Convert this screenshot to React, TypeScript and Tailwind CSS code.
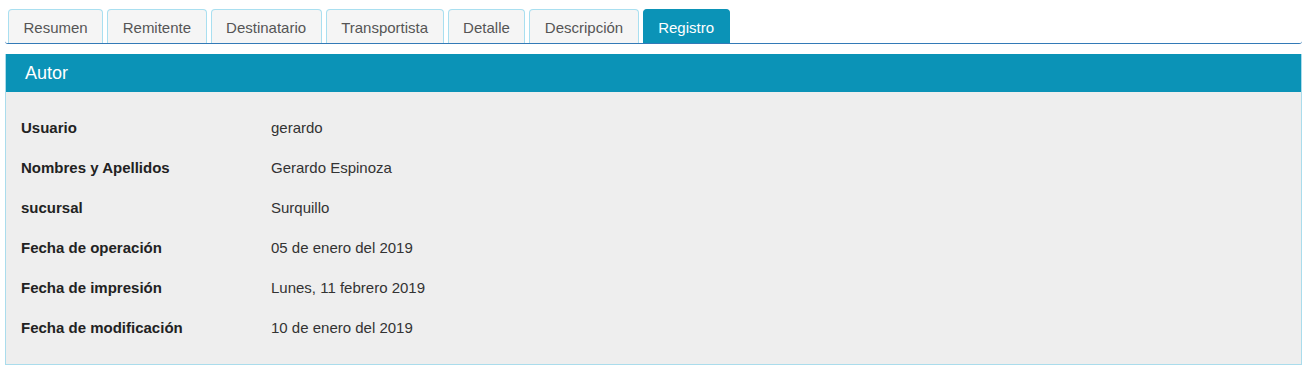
import React from "react";

const tabs = ["Resumen", "Remitente", "Destinatario", "Transportista", "Detalle", "Descripción", "Registro"];
const rows: [string, string][] = [
  ["Usuario", "gerardo"],
  ["Nombres y Apellidos", "Gerardo Espinoza"],
  ["sucursal", "Surquillo"],
  ["Fecha de operación", "05 de enero del 2019"],
  ["Fecha de impresión", "Lunes, 11 febrero 2019"],
  ["Fecha de modificación", "10 de enero del 2019"],
];

export default function App() {
  return (
    <div className="bg-white w-[1309px] h-[368px] pl-[5px] pr-[7px] pt-[9px] font-['Liberation_Sans',Arial,sans-serif] text-[#333]">
      <div className="flex gap-[4px] pl-[3px] border-b border-[#337ab7] rounded-b-[3px]">
        {tabs.map((t) => {
          const active = t === "Registro";
          return (
            <div
              key={t}
              className={
                active
                  ? "h-[34px] px-[14.5px] pt-[3px] flex items-center text-[15px] rounded-t-[4px] border border-b-0 border-[#0b93b7] bg-[#0b93b7] text-white"
                  : "h-[34px] px-[14.5px] pt-[3px] flex items-center text-[15px] rounded-t-[4px] border border-b-0 border-[#a9dff0] bg-[#f5f5f5] text-[#555]"
              }
            >
              {t}
            </div>
          );
        })}
      </div>
      <div className="mt-[10px] border border-[#aadcec] border-t-0">
        <div className="h-[38px] bg-[#0b93b7] flex items-center px-[19px] text-[18px] text-white">Autor</div>
        <div className="bg-[#eeeeee] pt-[16px] pb-[16px] px-[15px]">
          {rows.map(([k, v]) => (
            <div key={k} className="flex h-10 items-center text-[15px]">
              <div className="w-[250px] font-bold text-[#222]">{k}</div>
              <div className="text-[#333]">{v}</div>
            </div>
          ))}
        </div>
      </div>
    </div>
  );
}
